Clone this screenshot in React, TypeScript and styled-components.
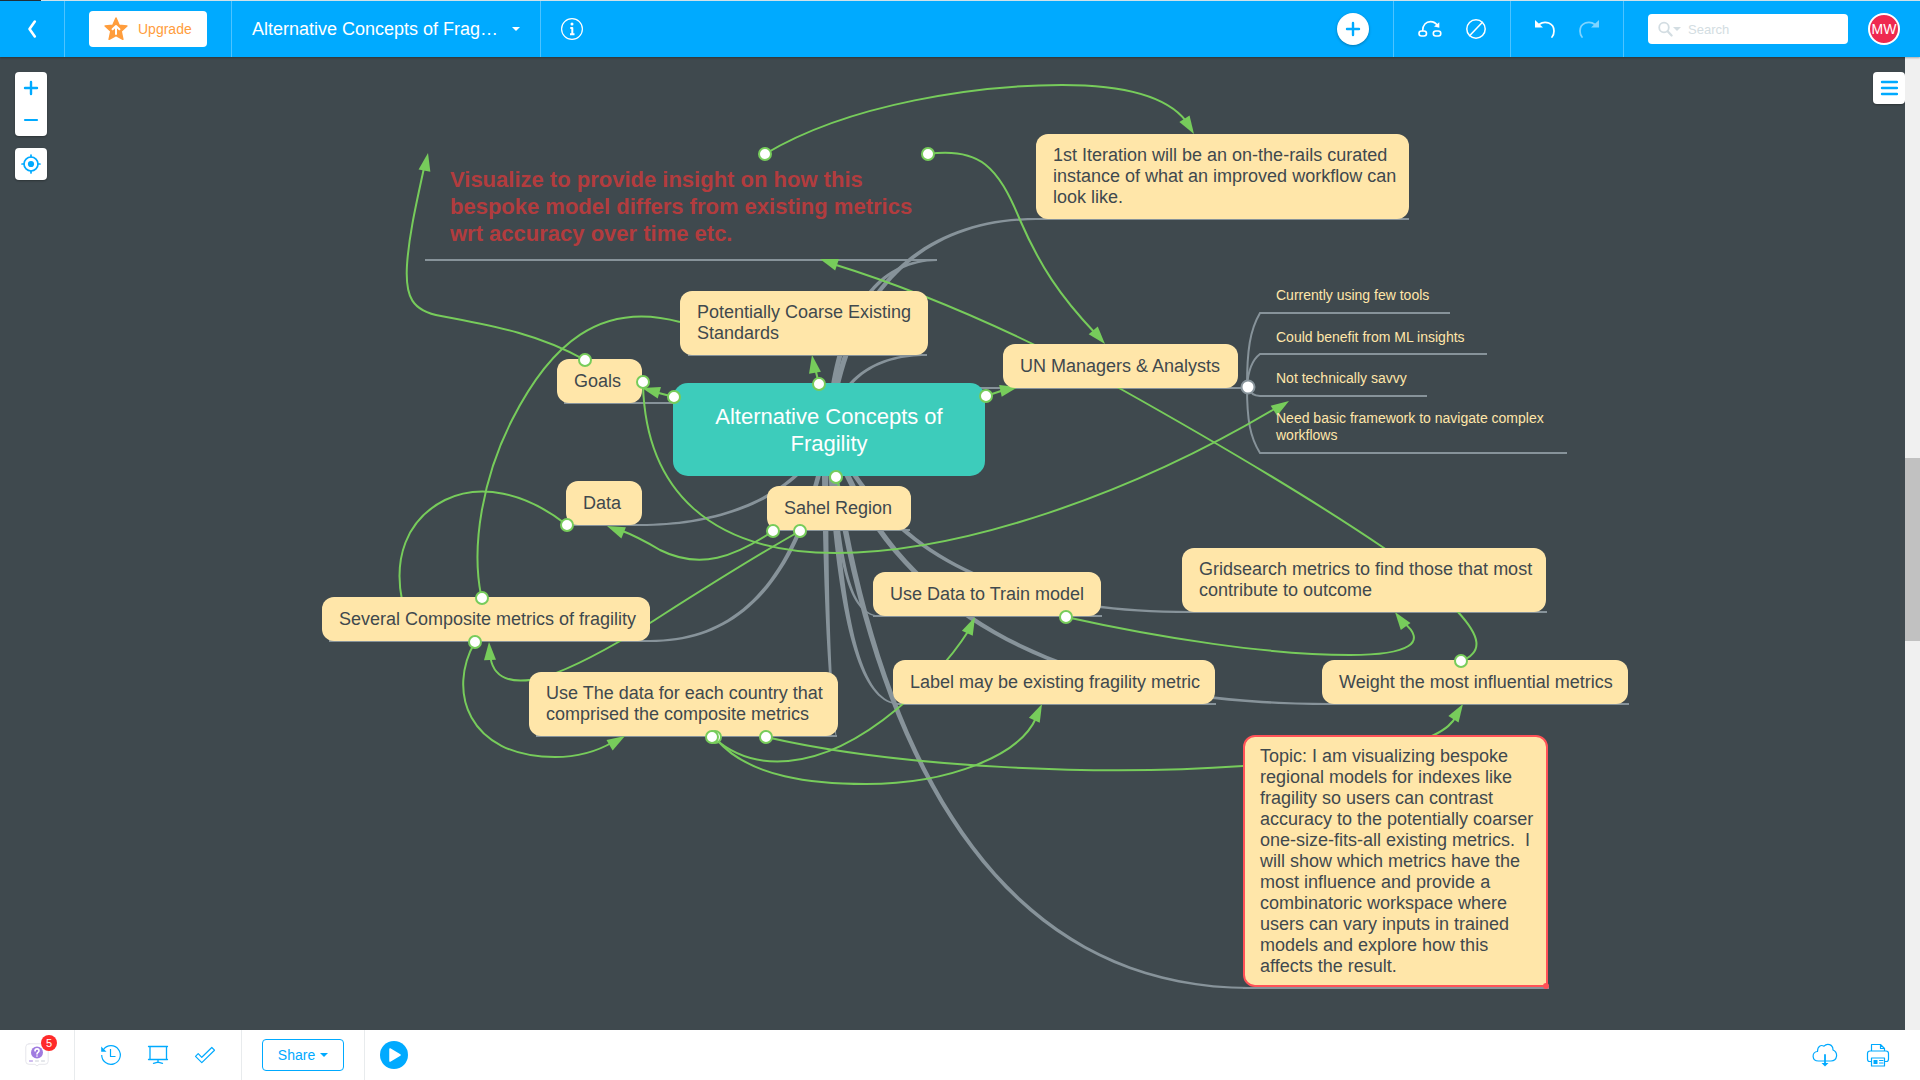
import React from "react";
import styled, { createGlobalStyle, css } from "styled-components";

const blue = "#00aaff";
const slate = "#3f494e";
const sand = "#ffe6a9";
const green = "#77cc5b";
const grey = "#87939a";

const GlobalStyle = createGlobalStyle`
  *, *::before, *::after { box-sizing: border-box; }
  body { margin: 0; font-family: "Liberation Sans", Arial, sans-serif; overflow: hidden; }
  button, input { font-family: inherit; }
  button { border: 0; padding: 0; background: none; cursor: pointer; }
`;

const Page = styled.div`
  display: flex;
  flex-direction: column;
  height: 100vh;
  background: ${slate};
`;

/* ---------- top bar ---------- */

const LoadStrip = styled.div`
  flex: none;
  height: 1px;
  background: linear-gradient(to right, #22303a 41px, #d5e6ee 41px);
`;

const TopBar = styled.header`
  flex: none;
  display: flex;
  height: 56px;
  background: ${blue};
  color: #fff;
  position: relative;
  z-index: 3;
  box-shadow: 0 1px 2px rgba(0, 0, 0, 0.3);
`;

const BarGroup = styled.div<{ $w?: number; $pad?: string; $gap?: number; $last?: boolean }>`
  display: flex;
  align-items: center;
  justify-content: ${(p) => (p.$pad ? "flex-start" : "center")};
  gap: ${(p) => p.$gap ?? 0}px;
  width: ${(p) => (p.$w ? `${p.$w}px` : "auto")};
  padding: ${(p) => p.$pad ?? "0"};
  border-right: ${(p) => (p.$last ? "0" : "1px solid rgba(255, 255, 255, 0.3)")};
`;

const Spacer = styled.div`
  flex: 1;
`;

const IconButton = styled.button<{ $dim?: boolean; $size?: number }>`
  display: grid;
  place-items: center;
  width: ${(p) => p.$size ?? 24}px;
  height: ${(p) => p.$size ?? 24}px;
  color: inherit;
  opacity: ${(p) => (p.$dim ? 0.5 : 1)};
  svg { display: block; }
`;

const Upgrade = styled.button`
  display: flex;
  align-items: center;
  gap: 10px;
  width: 118px;
  height: 36px;
  padding-left: 15px;
  border-radius: 4px;
  background: #fff;
  color: #ff9d3c;
  font-size: 14px;
`;

const TitleButton = styled.button`
  display: flex;
  align-items: center;
  gap: 14px;
  color: #fff;
  font-size: 18px;
`;

const Caret = styled.span`
  border: 4px solid transparent;
  border-top-color: currentColor;
  border-bottom: 0;
`;

const AddButton = styled.button`
  display: grid;
  place-items: center;
  width: 32px;
  height: 32px;
  border-radius: 50%;
  background: #fff;
  color: ${blue};
  box-shadow: 0 1px 3px rgba(0, 0, 0, 0.3);
`;

const SearchBox = styled.label`
  display: flex;
  align-items: center;
  gap: 6px;
  width: 200px;
  height: 30px;
  padding: 0 10px;
  border-radius: 4px;
  background: #fff;
  color: #d3dde2;
`;

const SearchInput = styled.input`
  flex: 1;
  min-width: 0;
  border: 0;
  outline: 0;
  padding: 0;
  font-size: 13px;
  &::placeholder { color: #d3dde2; opacity: 1; }
`;

const Avatar = styled.button`
  width: 32px;
  height: 32px;
  border: 2px solid #fff;
  border-radius: 50%;
  background: #ef2950;
  color: #fff;
  font-size: 14px;
`;

/* ---------- canvas ---------- */

const Workspace = styled.div`
  flex: 1;
  min-height: 0;
  display: flex;
`;

const Board = styled.main`
  flex: 1;
  position: relative;
  overflow: hidden;
`;

const ScrollTrack = styled.div`
  width: 15px;
  background: #f0f0f0;
  padding-top: 401px;
`;

const ScrollThumb = styled.div`
  height: 183px;
  background: #c1c1c1;
`;

const ToolRail = styled.div<{ $right?: boolean }>`
  position: absolute;
  top: 15px;
  ${(p) => (p.$right ? "right: 0;" : "left: 15px;")}
  display: flex;
  flex-direction: column;
  gap: 12px;
`;

const ToolCard = styled.div`
  display: flex;
  flex-direction: column;
  border-radius: 4px;
  background: #fff;
  color: ${blue};
  box-shadow: 0 1px 2px rgba(0, 0, 0, 0.3);
`;

const Lines = styled.svg`
  position: absolute;
  inset: 0;
  width: 100%;
  height: 100%;
  pointer-events: none;
`;

type Kind = "topic" | "root" | "note" | "plain" | "selected";

const kinds: Record<Kind, ReturnType<typeof css>> = {
  topic: css`
    min-height: 44px;
    padding: 11px 14px 11px 17px;
    border-radius: 12px;
    background: ${sand};
    color: ${slate};
    font-size: 18px;
    line-height: 21px;
  `,
  root: css`
    min-height: 93px;
    align-items: center;
    text-align: center;
    border-radius: 15px;
    background: #3dccbb;
    color: #fff;
    font-size: 22px;
    line-height: 27px;
  `,
  note: css`
    padding: 16px 25px;
    color: #b23c3e;
    font-size: 22px;
    font-weight: bold;
    line-height: 27px;
  `,
  plain: css`
    padding: 6px 16px;
    color: ${sand};
    font-size: 14px;
    line-height: 17px;
  `,
  selected: css`
    padding: 9px 12px 8px 15px;
    border: 2px solid #ff5257;
    border-radius: 12px 12px 0 12px;
    background: ${sand};
    color: ${slate};
    font-size: 18px;
    line-height: 21px;
  `,
};

const Node = styled.div<{ $x: number; $y: number; $w: number; $kind: Kind }>`
  position: absolute;
  left: ${(p) => p.$x}px;
  top: ${(p) => p.$y}px;
  width: ${(p) => p.$w}px;
  display: flex;
  flex-direction: column;
  justify-content: center;
  white-space: pre;
  ${(p) => kinds[p.$kind]}
`;

/* ---------- bottom bar ---------- */

const BottomBar = styled.footer`
  flex: none;
  display: flex;
  height: 50px;
  background: #fff;
  color: ${blue};
`;

const FootGroup = styled.div<{ $pad: string; $gap?: number; $last?: boolean }>`
  display: flex;
  align-items: center;
  gap: ${(p) => p.$gap ?? 0}px;
  padding: ${(p) => p.$pad};
  border-right: ${(p) => (p.$last ? "0" : "1px solid #e8ebed")};
`;

const HelpButton = styled.button`
  position: relative;
  width: 24px;
  height: 24px;
  svg { display: block; }
`;

const Badge = styled.span`
  position: absolute;
  top: -8px;
  right: -8px;
  width: 16px;
  border-radius: 8px;
  background: #ff2a2a;
  color: #fff;
  font-size: 11px;
  line-height: 16px;
`;

const ShareButton = styled.button`
  display: flex;
  align-items: center;
  justify-content: center;
  gap: 5px;
  width: 82px;
  height: 32px;
  border: 1px solid ${blue};
  border-radius: 4px;
  color: ${blue};
  font-size: 14px;
`;

/* ---------- map data ---------- */

/* Map coordinates start at the top of the window; the board starts below the bar. */
const ORIGIN = 57;

type NodeData = { kind: Kind; x: number; y: number; w: number; text: string };

const nodes: NodeData[] = [
  { kind: "note", x: 425, y: 150, w: 512, text: "Visualize to provide insight on how this\nbespoke model differs from existing metrics\nwrt accuracy over time etc." },
  { kind: "topic", x: 1036, y: 134, w: 373, text: "1st Iteration will be an on-the-rails curated\ninstance of what an improved workflow can\nlook like." },
  { kind: "topic", x: 680, y: 291, w: 248, text: "Potentially Coarse Existing\nStandards" },
  { kind: "topic", x: 557, y: 359, w: 85, text: "Goals" },
  { kind: "topic", x: 1003, y: 344, w: 235, text: "UN Managers & Analysts" },
  { kind: "root", x: 673, y: 383, w: 312, text: "Alternative Concepts of\nFragility" },
  { kind: "plain", x: 1260, y: 281, w: 190, text: "Currently using few tools" },
  { kind: "plain", x: 1260, y: 323, w: 227, text: "Could benefit from ML insights" },
  { kind: "plain", x: 1260, y: 364, w: 167, text: "Not technically savvy" },
  { kind: "plain", x: 1260, y: 404, w: 307, text: "Need basic framework to navigate complex\nworkflows" },
  { kind: "topic", x: 566, y: 481, w: 76, text: "Data" },
  { kind: "topic", x: 767, y: 486, w: 144, text: "Sahel Region" },
  { kind: "topic", x: 322, y: 597, w: 328, text: "Several Composite metrics of fragility" },
  { kind: "topic", x: 529, y: 672, w: 309, text: "Use The data for each country that\ncomprised the composite metrics" },
  { kind: "topic", x: 873, y: 572, w: 228, text: "Use Data to Train model" },
  { kind: "topic", x: 893, y: 660, w: 322, text: "Label may be existing fragility metric" },
  { kind: "topic", x: 1182, y: 548, w: 364, text: "Gridsearch metrics to find those that most\ncontribute to outcome" },
  { kind: "topic", x: 1322, y: 660, w: 306, text: "Weight the most influential metrics" },
  { kind: "selected", x: 1243, y: 735, w: 305, text: "Topic: I am visualizing bespoke\nregional models for indexes like\nfragility so users can contrast\naccuracy to the potentially coarser\none-size-fits-all existing metrics.  I\nwill show which metrics have the\nmost influence and provide a\ncombinatoric workspace where\nusers can vary inputs in trained\nmodels and explore how this\naffects the result." },
];

type Branch = [number, number, number, number, number, number, number, number, number, number];

/* Four Bézier points, then the width at the root and at the tip. */
const branches: Branch[] = [
  [829, 430, 846, 290, 922, 219, 1036, 219, 6, 2],
  [829, 430, 834, 330, 869, 260, 937, 260, 6, 2],
  [829, 430, 838, 385, 868, 355, 926, 355, 4, 2],
  [829, 430, 800, 403, 740, 403, 640, 403, 3, 2],
  [829, 430, 880, 388, 940, 388, 1010, 388, 3, 2],
  [829, 430, 802, 492, 730, 525, 640, 525, 4, 2],
  [829, 430, 800, 580, 740, 641, 650, 641, 5, 2],
  [825, 430, 825, 560, 828, 680, 836, 736, 7, 1],
  [829, 430, 838, 560, 848, 616, 880, 616, 5, 1],
  [829, 430, 838, 600, 855, 704, 900, 704, 7, 1],
  [829, 430, 872, 760, 1000, 988, 1250, 988, 6, 2],
  [829, 430, 900, 640, 1100, 704, 1330, 704, 6, 2],
  [829, 430, 890, 560, 1010, 612, 1190, 612, 5, 2],
];

function taper([x0, y0, x1, y1, x2, y2, x3, y3, w0, w1]: Branch): string {
  const left: string[] = [];
  const right: string[] = [];
  const steps = 40;
  for (let i = 0; i <= steps; i++) {
    const t = i / steps;
    const u = 1 - t;
    const x = u * u * u * x0 + 3 * u * u * t * x1 + 3 * u * t * t * x2 + t * t * t * x3;
    const y = u * u * u * y0 + 3 * u * u * t * y1 + 3 * u * t * t * y2 + t * t * t * y3;
    const dx = u * u * (x1 - x0) + 2 * u * t * (x2 - x1) + t * t * (x3 - x2);
    const dy = u * u * (y1 - y0) + 2 * u * t * (y2 - y1) + t * t * (y3 - y2);
    const len = Math.hypot(dx, dy) || 1;
    const half = (w0 + (w1 - w0) * t) / 2;
    left.push(`${(x - (dy / len) * half).toFixed(2)},${(y + (dx / len) * half).toFixed(2)}`);
    right.unshift(`${(x + (dy / len) * half).toFixed(2)},${(y - (dx / len) * half).toFixed(2)}`);
  }
  return [...left, ...right].join(" ");
}

const underlines: [number, number, number][] = [
  [425, 937, 260],
  [1036, 1409, 219],
  [688, 927, 355],
  [564, 642, 403],
  [1003, 1243, 388],
  [573, 642, 525],
  [774, 910, 530],
  [329, 650, 641],
  [536, 837, 736],
  [873, 1102, 616],
  [893, 1216, 704],
  [1182, 1547, 612],
  [1322, 1629, 704],
  [1243, 1549, 988],
];

const subBranches = [
  "M1247 387C1247 350 1250 330 1260 313H1450",
  "M1247 387C1248 370 1252 360 1260 354H1487",
  "M1248 387C1250 393 1254 396 1260 396H1427",
  "M1247 387C1247 420 1250 437 1260 453H1567",
];

type Relation = { d: string; tip?: [number, number]; from?: [number, number] };

const relations: Relation[] = [
  { d: "M765 154C850 103 980 85 1062 85C1130 85 1168 98 1186 121", tip: [1194, 134], from: [1184, 118] },
  { d: "M928 154C980 147 998 167 1020 220C1040 266 1060 296 1095 333", tip: [1105, 344], from: [1092, 329] },
  { d: "M585 360C540 335 500 327 441 316C412 311 405 297 407 265C409 235 416 205 424 168", tip: [428, 153], from: [424, 173] },
  { d: "M680 322C600 300 550 345 512 420C483 477 471 545 481 595" },
  { d: "M643 385C646 490 710 553 836 553C960 553 1130 495 1276 408", tip: [1289, 401], from: [1272, 412] },
  { d: "M674 397L655 392", tip: [642, 388], from: [660, 393] },
  { d: "M819 384L815 368", tip: [812, 355], from: [815, 373] },
  { d: "M986 396L1004 390", tip: [1018, 387], from: [1000, 391] },
  { d: "M567 525C525 492 480 483 445 500C405 520 394 560 402 600" },
  { d: "M773 531C735 557 700 570 660 550C645 541 636 536 620 530", tip: [607, 526], from: [624, 533] },
  { d: "M800 531C745 562 697 593 650 623C618 643 575 667 545 677C510 686 492 678 490 654", tip: [489, 642], from: [490, 660] },
  { d: "M475 642C447 690 467 757 555 757C578 757 596 752 613 742", tip: [625, 736], from: [610, 745] },
  { d: "M714 738C750 770 815 777 897 709C925 685 948 663 969 630", tip: [975, 617], from: [967, 634] },
  { d: "M717 740C750 778 815 784 866 784C950 784 1020 755 1036 718", tip: [1042, 704], from: [1034, 721] },
  { d: "M766 737C900 768 1100 776 1243 766C1330 760 1400 752 1434 735C1446 729 1452 724 1457 715", tip: [1463, 704], from: [1453, 720] },
  { d: "M1066 617C1160 638 1270 655 1350 655C1410 655 1428 642 1403 622", tip: [1395, 612], from: [1406, 627] },
  { d: "M1461 661C1484 652 1480 636 1458 612C1436 588 1410 565 1384 548C1300 491 1210 439 1119 388C1030 340 930 294 833 264", tip: [820, 259], from: [838, 265] },
  { d: "M836 477L840 490" },
];

function arrowHead([tx, ty]: [number, number], [fx, fy]: [number, number]): string {
  const len = Math.hypot(tx - fx, ty - fy);
  const dx = (tx - fx) / len;
  const dy = (ty - fy) / len;
  const bx = tx - dx * 18;
  const by = ty - dy * 18;
  return `${tx},${ty} ${bx - dy * 6},${by + dx * 6} ${bx + dy * 6},${by - dx * 6}`;
}

const handles: [number, number][] = [
  [765, 154], [928, 154], [585, 360], [643, 382], [674, 397], [819, 384], [986, 396],
  [567, 525], [836, 477], [773, 531], [800, 531], [482, 598], [475, 642],
  [715, 737], [712, 737], [766, 737], [1066, 617], [1461, 661],
];

/* ---------- icons ---------- */

const stroke = { fill: "none", stroke: "currentColor", strokeLinecap: "round" as const, strokeLinejoin: "round" as const };

const BackIcon = () => (
  <svg width="12" height="20" viewBox="0 0 12 20" {...stroke} strokeWidth="2.600"><path d="M8.800 2.500L3.500 10l5.300 7.500" /></svg>
);
const StarIcon = () => (
  <svg width="24" height="24" viewBox="0 0 24 24">
    <path fill="currentColor" stroke="currentColor" strokeWidth="1.500" strokeLinejoin="round" d="M12 1l3.200 7.200 7.700.800-5.700 5.300 1.700 8L12 18.500l-6.900 3.800 1.700-8L1.100 9l7.700-.800z" />
    <path {...stroke} stroke="#fff" strokeWidth="2" d="M12 17V9.500M8.600 12.300L12 9l3.400 3.300" />
  </svg>
);
const InfoIcon = () => (
  <svg width="24" height="24" viewBox="0 0 24 24" {...stroke}>
    <circle cx="12" cy="12" r="10.400" strokeWidth="1.200" />
    <circle cx="12" cy="7" r="1.500" fill="currentColor" stroke="none" />
    <path d="M10.300 11H12.300V17M10 17.300h4.500" strokeWidth="2" strokeLinecap="butt" />
  </svg>
);
const PlusIcon = () => (
  <svg width="16" height="16" viewBox="0 0 16 16" {...stroke} strokeWidth="2.400"><path d="M8 2v12M2 8h12" /></svg>
);
const MinusIcon = () => (
  <svg width="16" height="16" viewBox="0 0 16 16" {...stroke} strokeWidth="2.200"><path d="M2 8h12" /></svg>
);
const RelationIcon = () => (
  <svg width="26" height="20" viewBox="0 0 26 20" {...stroke} strokeWidth="1.600">
    <rect x="2" y="12" width="7.500" height="5" rx="2.500" />
    <rect x="16.300" y="12" width="7.500" height="5" rx="2.500" />
    <path d="M5.700 11.500C5.700 6 9 2.600 13.500 2.600c3.300 0 5.500 1.500 7 3.900" />
    <path d="M22.300 3.300v5.500l-5.300-1.400z" fill="currentColor" stroke="none" />
  </svg>
);
const BanIcon = () => (
  <svg width="22" height="22" viewBox="0 0 22 22" {...stroke} strokeWidth="1.500"><circle cx="11" cy="11" r="9.200" /><path d="M4.800 17.600L17.200 4.400" /></svg>
);
const UndoIcon = ({ flip }: { flip?: boolean }) => (
  <svg width="22" height="20" viewBox="0 0 22 20" {...stroke} strokeWidth="1.700">
    <g transform={flip ? "matrix(-1 0 0 1 22 0)" : undefined}>
      <path d="M5 5.500C11 1 20 4 20 12c0 2.500-.8 4.500-2 6" />
      <path d="M1 1v7.500h8z" fill="currentColor" stroke="none" />
    </g>
  </svg>
);
const SearchIcon = () => (
  <svg width="24" height="16" viewBox="0 0 24 16" {...stroke}>
    <circle cx="6" cy="6.500" r="4.800" strokeWidth="1.800" /><path d="M9.600 10.200l4 4.300" strokeWidth="2.200" />
    <path d="M15 6h8l-4 4z" fill="currentColor" stroke="none" />
  </svg>
);
const LocateIcon = () => (
  <svg width="20" height="20" viewBox="0 0 20 20" {...stroke} strokeWidth="1.700">
    <circle cx="10" cy="10" r="7" /><circle cx="10" cy="10" r="3.100" fill="currentColor" stroke="none" />
    <path d="M10 1v2M10 17v2M1 10h2M17 10h2" />
  </svg>
);
const MenuIcon = () => (
  <svg width="18" height="16" viewBox="0 0 18 16" {...stroke} strokeWidth="2.400"><path d="M2 2h15M2 8h15M2 14h15" /></svg>
);
const HelpIcon = () => (
  <svg width="24" height="24" viewBox="0 0 24 24" {...stroke}>
    <path d="M4 .800h16q3.200 0 3.200 3v14.500q0 3-3.200 3h-6L12 23l-2-1.700H4q-3.200 0-3.200-3V3.800q0-3 3.200-3z" stroke="#e6e6ec" />
    <circle cx="12" cy="9.500" r="6" fill="#a07be0" stroke="none" />
    <path d="M10 7.900c.1-2.800 4-2.600 4-.200 0 1.600-2 1.700-2 3.200M12 13v.1" stroke="#fff" strokeWidth="1.600" />
    <path d="M4.500 18h3" stroke="#a07be0" /><path d="M10.500 18h3M16.500 18h3" stroke="#c9ced6" />
  </svg>
);
const HistoryIcon = () => (
  <svg width="22" height="22" viewBox="0 0 22 22" {...stroke} strokeWidth="1.200">
    <path d="M3.500 5.500A9.300 9.300 0 1 1 1.700 11M10.500 5v7.500h5" strokeLinecap="butt" />
    <path d="M1.200 2.500v5.300h5.300z" fill="currentColor" stroke="none" />
  </svg>
);
const ScreenIcon = () => (
  <svg width="22" height="20" viewBox="0 0 22 20" {...stroke} strokeWidth="1.300">
    <path d="M1.500 1.500h19M3 1.500v13h16.500v-13M1.500 14.500h19M11 14.500v3M6.500 18.300l4.500-1.200 4.500 1.200" />
  </svg>
);
const CheckIcon = () => (
  <svg width="22" height="18" viewBox="0 0 22 18" {...stroke} strokeWidth="1.200"><path d="M1.500 10.300l2.700-2.700 3.600 3.700 10-9.800 2.700 2.700L7.800 16.600z" /></svg>
);
const PlayIcon = () => (
  <svg width="28" height="28" viewBox="0 0 28 28"><circle cx="14" cy="14" r="14" fill="currentColor" /><path d="M10 8l10 6-10 6z" fill="#fff" stroke="#fff" strokeWidth="1.500" strokeLinejoin="round" /></svg>
);
const CloudIcon = () => (
  <svg width="26" height="24" viewBox="0 0 26 24" {...stroke} strokeWidth="1.200">
    <path d="M6.500 18C-.5 18-.5 9 5.500 8.500 5.500 3 9 1.500 12 3.200c3-3.500 9-2 9 3.800 5.500 2.500 4.500 11-2 11z" />
    <path d="M13 12v9" strokeWidth="1.800" /><path d="M9.500 20h7L13 23.500z" fill="currentColor" stroke="none" />
  </svg>
);
const PrintIcon = () => (
  <svg width="24" height="24" viewBox="0 0 24 24" {...stroke} strokeWidth="1.200">
    <path d="M5.500 8V1.500h9L18.500 5.500V8M14.500 1.500v4h4M5.500 18.500H3.500Q1.500 18.500 1.500 16V10.500Q1.500 8 4 8h16q2.500 0 2.500 2.500V16q0 2.500-2 2.500h-2M5.500 15h13v8h-13z" />
    <path d="M7.500 17h4v4h-4z" fill="currentColor" stroke="none" /><path d="M13.500 17.500h3.500M13.500 20h3.500" />
  </svg>
);

/* ---------- page ---------- */

export default function App() {
  return (
    <Page>
      <GlobalStyle />
      <LoadStrip />
      <TopBar>
        <BarGroup $w={65}><IconButton aria-label="Back"><BackIcon /></IconButton></BarGroup>
        <BarGroup $w={167}><Upgrade><StarIcon />Upgrade</Upgrade></BarGroup>
        <BarGroup $w={309} $pad="0 0 0 20px"><TitleButton>Alternative Concepts of Frag…<Caret /></TitleButton></BarGroup>
        <BarGroup $w={62} $last><IconButton aria-label="Information"><InfoIcon /></IconButton></BarGroup>
        <Spacer />
        <BarGroup $pad="0 24px 0 0"><AddButton aria-label="Add topic"><PlusIcon /></AddButton></BarGroup>
        <BarGroup $w={117} $gap={23}>
          <IconButton aria-label="Add relation"><RelationIcon /></IconButton>
          <IconButton aria-label="Hide completed"><BanIcon /></IconButton>
        </BarGroup>
        <BarGroup $w={113} $gap={20}>
          <IconButton aria-label="Undo"><UndoIcon /></IconButton>
          <IconButton aria-label="Redo" $dim><UndoIcon flip /></IconButton>
        </BarGroup>
        <BarGroup $pad="0 20px 0 24px" $gap={20} $last>
          <SearchBox>
            <SearchIcon />
            <SearchInput type="text" placeholder="Search" aria-label="Search" />
          </SearchBox>
          <Avatar>MW</Avatar>
        </BarGroup>
      </TopBar>

      <Workspace>
        <Board>
          <Lines aria-hidden="true">
            <g transform={`translate(0 ${-ORIGIN})`}>
              {branches.map((b, i) => <polygon key={i} points={taper(b)} fill={grey} />)}
              <g fill="none" stroke={grey} strokeWidth="2">
                {underlines.map(([a, b, y]) => <path key={`${a}-${y}`} d={`M${a} ${y}H${b}`} />)}
                {subBranches.map((d) => <path key={d} d={d} />)}
              </g>
              {relations.map((r) => (
                <g key={r.d}>
                  <path d={r.d} fill="none" stroke={green} strokeWidth="2" />
                  {r.tip && r.from && <polygon points={arrowHead(r.tip, r.from)} fill={green} />}
                </g>
              ))}
            </g>
          </Lines>
          {nodes.map((n) => (
            <Node key={n.text} $kind={n.kind} $x={n.x} $y={n.y - ORIGIN} $w={n.w}>{n.text}</Node>
          ))}
          <Lines aria-hidden="true">
            <g transform={`translate(0 ${-ORIGIN})`} fill="#fff" stroke={green} strokeWidth="2">
              {handles.map(([x, y]) => <circle key={`${x}-${y}`} cx={x} cy={y} r="6" />)}
              <circle cx="1248" cy="387" r="6.500" stroke={grey} />
              <circle cx="1546" cy="986" r="3" fill="#ff5257" stroke="none" />
            </g>
          </Lines>
          <ToolRail>
            <ToolCard>
              <IconButton $size={32} aria-label="Zoom in"><PlusIcon /></IconButton>
              <IconButton $size={32} aria-label="Zoom out"><MinusIcon /></IconButton>
            </ToolCard>
            <ToolCard><IconButton $size={32} aria-label="Centre map"><LocateIcon /></IconButton></ToolCard>
          </ToolRail>
          <ToolRail $right>
            <ToolCard><IconButton $size={32} aria-label="Menu"><MenuIcon /></IconButton></ToolCard>
          </ToolRail>
        </Board>
        <ScrollTrack><ScrollThumb /></ScrollTrack>
      </Workspace>

      <BottomBar>
        <FootGroup $pad="0 25px">
          <HelpButton aria-label="Help"><HelpIcon /><Badge>5</Badge></HelpButton>
        </FootGroup>
        <FootGroup $pad="0 24px" $gap={23}>
          <IconButton aria-label="History"><HistoryIcon /></IconButton>
          <IconButton aria-label="Present"><ScreenIcon /></IconButton>
          <IconButton aria-label="Tasks"><CheckIcon /></IconButton>
        </FootGroup>
        <FootGroup $pad="0 20px"><ShareButton>Share<Caret /></ShareButton></FootGroup>
        <FootGroup $pad="0 15px" $last><IconButton $size={28} aria-label="Play"><PlayIcon /></IconButton></FootGroup>
        <Spacer />
        <FootGroup $pad="0 30px 0 0" $gap={30} $last>
          <IconButton aria-label="Download"><CloudIcon /></IconButton>
          <IconButton aria-label="Print"><PrintIcon /></IconButton>
        </FootGroup>
      </BottomBar>
    </Page>
  );
}
